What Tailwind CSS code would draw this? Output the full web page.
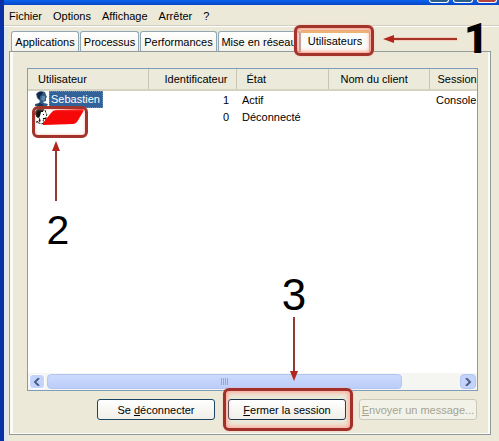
<!DOCTYPE html>
<html lang="fr">
<head>
  <meta charset="UTF-8" />
  <title>Gestionnaire des tâches</title>
  <script src="https://cdn.jsdelivr.net/npm/@tailwindcss/browser@4"></script>
</head>
<body class="min-h-screen flex flex-col overflow-hidden bg-[#ece9d8] border-l-4 border-[#0831a5] text-[11px] leading-4 text-black font-['Liberation_Sans',sans-serif]">

  <!-- Title bar -->
  <header class="h-[5px] flex justify-end gap-1 pr-0.5 bg-linear-to-b from-[#0a62ec] to-[#0846c8]">
    <button aria-label="Réduire" class="w-5 h-[3px] rounded-b-sm border border-t-0 border-white bg-[#2a5f8c]"></button>
    <button aria-label="Agrandir" class="w-5 h-[3px] rounded-b-sm border border-t-0 border-white bg-[#2a5f8c]"></button>
    <button aria-label="Fermer" class="w-5 h-[3px] rounded-b-sm border border-t-0 border-white bg-[#b8433c]"></button>
  </header>

  <!-- Menu bar -->
  <nav class="h-[22px] flex items-center gap-[11px] pl-[5px] border-b border-white shadow-[inset_0_-1px_0_#d2cfc0]">
    <button>Fichier</button>
    <button>Options</button>
    <button>Affichage</button>
    <button>Arrêter</button>
    <button>?</button>
  </nav>

  <main class="flex-1 flex flex-col pt-[3px] pl-[5px] pr-2 pb-[6px] shadow-[inset_4px_0_0_#dfe7ee]">
    <!-- Tabs -->
    <div role="tablist" class="flex items-end pl-0.5">
      <button role="tab" class="w-17 h-5 mr-px rounded-t-[3px] border border-b-0 border-[#91a7b4] bg-linear-to-b from-white to-[#f3f2ea] whitespace-nowrap">Applications</button>
      <button role="tab" class="w-[59px] h-5 mr-px rounded-t-[3px] border border-b-0 border-[#91a7b4] bg-linear-to-b from-white to-[#f3f2ea] whitespace-nowrap">Processus</button>
      <button role="tab" class="w-[77px] h-5 mr-px rounded-t-[3px] border border-b-0 border-[#91a7b4] bg-linear-to-b from-white to-[#f3f2ea] whitespace-nowrap">Performances</button>
      <button role="tab" class="w-[82px] h-5 rounded-t-[3px] border border-b-0 border-[#91a7b4] bg-linear-to-b from-white to-[#f3f2ea] whitespace-nowrap">Mise en réseau</button>
      <div class="relative -mb-px">
        <button role="tab" aria-selected="true" class="relative w-[70px] h-[22px] pb-1 block rounded-t-[3px] border border-b-0 border-t-3 border-[#b9a9a0] border-t-[#e8b676] bg-[#fcfcfa] whitespace-nowrap">Utilisateurs</button>
        <!-- Step 1 -->
        <div class="absolute z-10 -left-[6px] -top-[5px] w-20 h-[31px] rounded-md border-3 border-[#a2342c] shadow-[inset_0_0_4px_1px_#ff8d7d,0_0_2px_#ffb5a8] pointer-events-none"></div>
        <svg class="absolute z-10 left-[83px] top-1" width="74" height="10" viewBox="0 0 74 10">
          <path d="M8 5H74" stroke="#f6c9b8" stroke-width="4" />
          <path d="M8 5H74" stroke="#a23325" stroke-width="2" />
          <path d="M0 5L11 1V9Z" fill="#b3261d" />
        </svg>
        <span class="absolute z-10 left-[164px] -top-[7px] text-[42px] leading-8 font-black font-['Roboto',sans-serif]">1</span>
      </div>
    </div>

    <section class="flex-1 flex flex-col pt-4 pl-[17px] pr-3 pb-[14px] border border-[#919b9c] bg-[#ece9d8] shadow-[inset_3px_0_0_#fbfaf5,inset_-2px_-1px_0_#fbfaf5]">
      <!-- User list -->
      <div class="flex-1 flex flex-col border border-[#7f9db9] bg-white">
        <div class="flex-1 overflow-hidden">
          <table class="w-full table-fixed">
            <thead>
              <tr class="h-[21px] bg-[#ebeadb] border-b-2 border-[#d6d2c2] text-left whitespace-nowrap">
                <th class="w-[120px] pl-[10px] font-normal border-r border-[#c7c5b2]">Utilisateur</th>
                <th class="w-[88px] pr-2 font-normal text-right border-r border-[#c7c5b2]">Identificateur</th>
                <th class="w-[92px] pl-[10px] font-normal border-r border-[#c7c5b2]">État</th>
                <th class="w-[101px] pl-3 font-normal border-r border-[#c7c5b2]">Nom du client</th>
                <th class="pl-2 font-normal">Session</th>
              </tr>
            </thead>
            <tbody class="whitespace-nowrap">
              <tr class="h-[17px]">
                <td class="pl-[6px]">
                  <div class="flex">
                    <svg class="w-[15px] h-4" viewBox="0 0 15 16">
                      <path d="M4 1L7 0L11 1L12 4L13 6L12 7V10L9 11L10 12L14 13L13 15L7 16L1 15V13L5 12L6 10L3 7L2 3Z" fill="#315b8a" />
                      <path d="M3 3L5 1L9 1L8 4L6 5L6 8L4 7Z" fill="#172840" />
                      <path d="M8 5H11V9L9 10L7 8Z" fill="#6386ad" />
                      <path d="M2 14L6 12L10 14L7 16Z" fill="#1c3554" />
                    </svg>
                    <span class="w-[54px] h-[17px] pl-0.5 bg-[#316299] text-white outline-1 -outline-offset-1 outline-dotted outline-[#6d91b8]">Sebastien</span>
                  </div>
                </td>
                <td class="pr-[7px] text-right">1</td>
                <td class="pl-[6px]">Actif</td>
                <td></td>
                <td class="pl-[7px]">Console</td>
              </tr>
              <tr class="h-[17px]">
                <td class="pl-[6px]">
                  <div class="relative flex h-[17px]">
                    <svg class="w-[51px] h-[17px]" viewBox="0 0 51 17">
                      <path d="M3 2L6 1L11 2L12 5L13 7L12 8V11L9 12L10 14L8 16L2 14L5 13L6 11L2 8L1 4Z" fill="#fff" stroke="#222" stroke-dasharray="3 1" />
                      <path d="M1 4L3 1L10 1L9 4L7 4L6 8L5 10L2 8Z" fill="#111" />
                      <path d="M9 6H10V7H9ZM9 10H12V11H9ZM5 11L7 13L5 14Z" fill="#111" />
                      <path d="M10 17Q8 17 9 15L17 5Q19 2 22 2L48 1Q51 1 49 4L43 14Q41 16 39 16Z" fill="#f60808" />
                    </svg>
                    <!-- Step 2 -->
                    <div class="absolute -left-0.5 -top-[2px] w-14 h-8 rounded-md border-3 border-[#a2342c] shadow-[inset_0_0_3px_#ffb0a5] pointer-events-none"></div>
                    <div class="absolute left-2 top-[33px] w-7 flex flex-col items-center">
                      <svg width="10" height="60" viewBox="0 0 10 60">
                        <path d="M5 8V60" stroke="#8f3a33" stroke-width="2" />
                        <path d="M5 0L9 10H1Z" fill="#b3261d" />
                      </svg>
                      <span class="pl-1 mt-[11px] text-[41px] leading-9">2</span>
                    </div>
                  </div>
                </td>
                <td class="pr-[7px] text-right">0</td>
                <td class="pl-[6px]">Déconnecté</td>
                <td></td>
                <td></td>
              </tr>
            </tbody>
          </table>
        </div>

        <!-- Horizontal scrollbar -->
        <div class="h-[17px] flex items-center px-px bg-[#f5f5f1]">
          <button aria-label="Défiler à gauche" class="w-4 h-[15px] flex items-center justify-center rounded-sm border border-white bg-[#c3d3fc]">
            <svg width="8" height="8" viewBox="0 0 8 8" fill="none" stroke="#4d6185" stroke-width="2"><path d="M6 0L2 4L6 8" /></svg>
          </button>
          <div class="flex-1 h-[15px] flex pl-0.5">
            <div class="w-[86%] flex items-center justify-center gap-px rounded-sm border border-[#b3c5f2] bg-linear-to-b from-[#cbdafd] to-[#bccdf8]">
              <i class="w-px h-[7px] bg-[#8fa9e3]"></i>
              <i class="w-px h-[7px] bg-[#8fa9e3]"></i>
              <i class="w-px h-[7px] bg-[#8fa9e3]"></i>
              <i class="w-px h-[7px] bg-[#8fa9e3]"></i>
            </div>
          </div>
          <button aria-label="Défiler à droite" class="w-4 h-[15px] flex items-center justify-center rounded-sm border border-[#b3c5f2] bg-[#c3d3fc]">
            <svg width="8" height="8" viewBox="0 0 8 8" fill="none" stroke="#4d6185" stroke-width="2"><path d="M2 0L6 4L2 8" /></svg>
          </button>
        </div>
      </div>

      <!-- Actions -->
      <div class="flex justify-end gap-[13px] pt-2 pr-px">
        <button class="w-[118px] h-[21px] rounded-[3px] border border-[#1c4565] bg-linear-to-b from-white to-[#f0efe8] whitespace-nowrap">Se <u>d</u>éconnecter</button>
        <div class="relative">
          <button class="w-[118px] h-[21px] block rounded-[3px] border border-[#1c3550] bg-linear-to-b from-white to-[#f0efe8] whitespace-nowrap"><u>F</u>ermer la session</button>
          <!-- Step 3 -->
          <div class="absolute -left-[5px] -top-[11px] w-[130px] h-[43px] rounded-md border-3 border-[#a2302a] shadow-[inset_0_0_5px_1px_#ff9c90,0_0_2px_#ffb5a8] pointer-events-none"></div>
          <div class="absolute left-[52px] -top-[124px] w-7 flex flex-col items-center">
            <span class="mb-0.5 text-[44px] leading-10">3</span>
            <svg width="10" height="64" viewBox="0 0 10 64">
              <path d="M5 0V56" stroke="#8f3a33" stroke-width="2" />
              <path d="M5 64L9 54H1Z" fill="#b3261d" />
            </svg>
          </div>
        </div>
        <button disabled class="w-[118px] h-[21px] rounded-[3px] border border-[#cac8bb] bg-[#f3f2e9] text-[#a5a390] whitespace-nowrap"><u>E</u>nvoyer un message...</button>
      </div>
    </section>
  </main>
</body>
</html>
